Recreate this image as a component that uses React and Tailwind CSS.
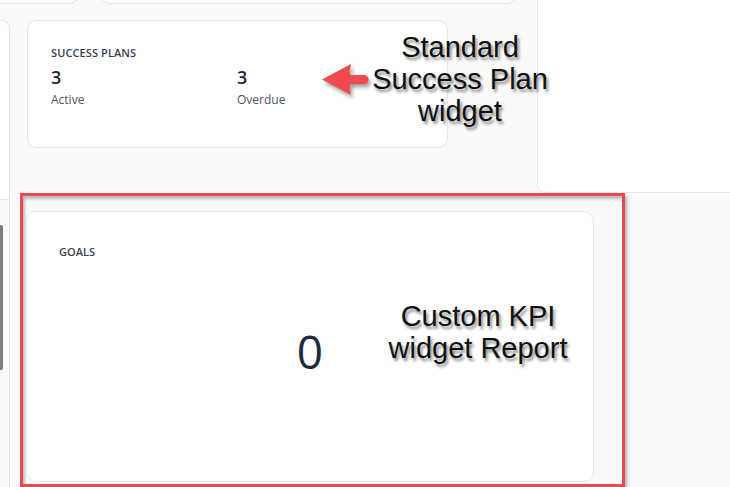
import React from "react";

function SuccessPlans() {
  return (
    <div className="w-[421px] h-[128px] bg-white border border-[#e6e6e6] rounded-[10px] pl-[23px] pt-[24px]">
      <h3 className="text-[11px] leading-[15px] font-semibold text-[#3a4150] tracking-[0.1px]">SUCCESS PLANS</h3>
      <div className="flex mt-[5px]">
        <div className="w-[186px]">
          <div className="text-[18px] leading-[24px] font-semibold text-[#1f2937]">3</div>
          <div className="text-[12px] leading-[16px] mt-[3px] text-[#4b5563]">Active</div>
        </div>
        <div>
          <div className="text-[18px] leading-[24px] font-semibold text-[#1f2937]">3</div>
          <div className="text-[12px] leading-[16px] mt-[3px] text-[#4b5563]">Overdue</div>
        </div>
      </div>
    </div>
  );
}

function Goals() {
  return (
    <div className="w-[568px] flex-1 mt-[15px] ml-[3px] mb-[2px] bg-white border border-[#e8e8e8] rounded-[10px] p-8 flex flex-col">
      <h3 className="text-[11px] leading-[15px] font-semibold text-[#3a4150]">GOALS</h3>
      <div className="flex-1 flex items-center justify-center pb-[6px]">
        <span className="text-[46px] leading-none text-[#1e2a3b]">0</span>
      </div>
    </div>
  );
}

export default function App() {
  const note = "absolute w-[200px] text-center text-[29px] leading-[32px] text-[#111] font-['Liberation_Sans',Arial,sans-serif] [text-shadow:2px_3px_3px_rgba(0,0,0,0.45)]";

  return (
    <div className="relative w-[730px] h-[487px] overflow-hidden bg-[#fafafa] flex flex-col font-['Open_Sans',sans-serif]">
      {/* top section */}
      <div className="h-[193px] flex">
        <div className="w-[537px] flex flex-col">
          <div className="h-[4px] overflow-hidden flex items-end">
            <div className="w-[79px] h-[20px] shrink-0 bg-white border-b border-r border-[#e6e6e6] rounded-br-[10px]" />
            <div className="w-[417px] h-[20px] ml-[21px] shrink-0 bg-white border-b border-x border-[#e6e6e6] rounded-b-[10px]" />
          </div>
          <div className="flex-1 flex">
            <div className="w-[10px] pt-[16px]">
              <div className="h-full bg-white border-t border-r border-[#e6e6e6] rounded-tr-[8px]" />
            </div>
            <div className="pl-[17px] pt-[16px]">
              <SuccessPlans />
            </div>
          </div>
        </div>
        <div className="flex-1 bg-white border-l border-b border-[#e6e6e6] rounded-bl-[8px]" />
      </div>

      {/* bottom section */}
      <div className="flex-1 flex">
        <div className="w-[10px] border-r border-[#e6e6e6] flex flex-col">
          <div className="h-[7px] bg-white border-b border-[#e6e6e6]" />
          <div className="mt-[25px] h-[145px] w-[3px] bg-[#7d7d7d] rounded-r-[2px]" />
        </div>
        <div className="ml-[10px] w-[605px] border-[3px] border-[#ea4a4f] flex flex-col shadow-[2px_3px_3px_rgba(0,0,0,0.3),inset_2px_3px_3px_rgba(0,0,0,0.25)]">
          <Goals />
        </div>
      </div>

      {/* annotations */}
      <div className={note + " left-[360px] top-[31px]"}>
        Standard<br />Success Plan<br />widget
      </div>
      <div className={note + " left-[378px] top-[300px]"}>
        Custom KPI<br />widget Report
      </div>
      <svg className="absolute left-[318px] top-[60px] drop-shadow-[2px_3px_2px_rgba(0,0,0,0.4)]" width="56" height="40" viewBox="0 0 56 40">
        <path d="M4 19.5 L33 4 Q31 10 32 15 L46 15 A4.5 4.5 0 0 1 46 24 L32 24 Q31 29 33 35 Z" fill="#ef4a50" />
      </svg>
    </div>
  );
}
